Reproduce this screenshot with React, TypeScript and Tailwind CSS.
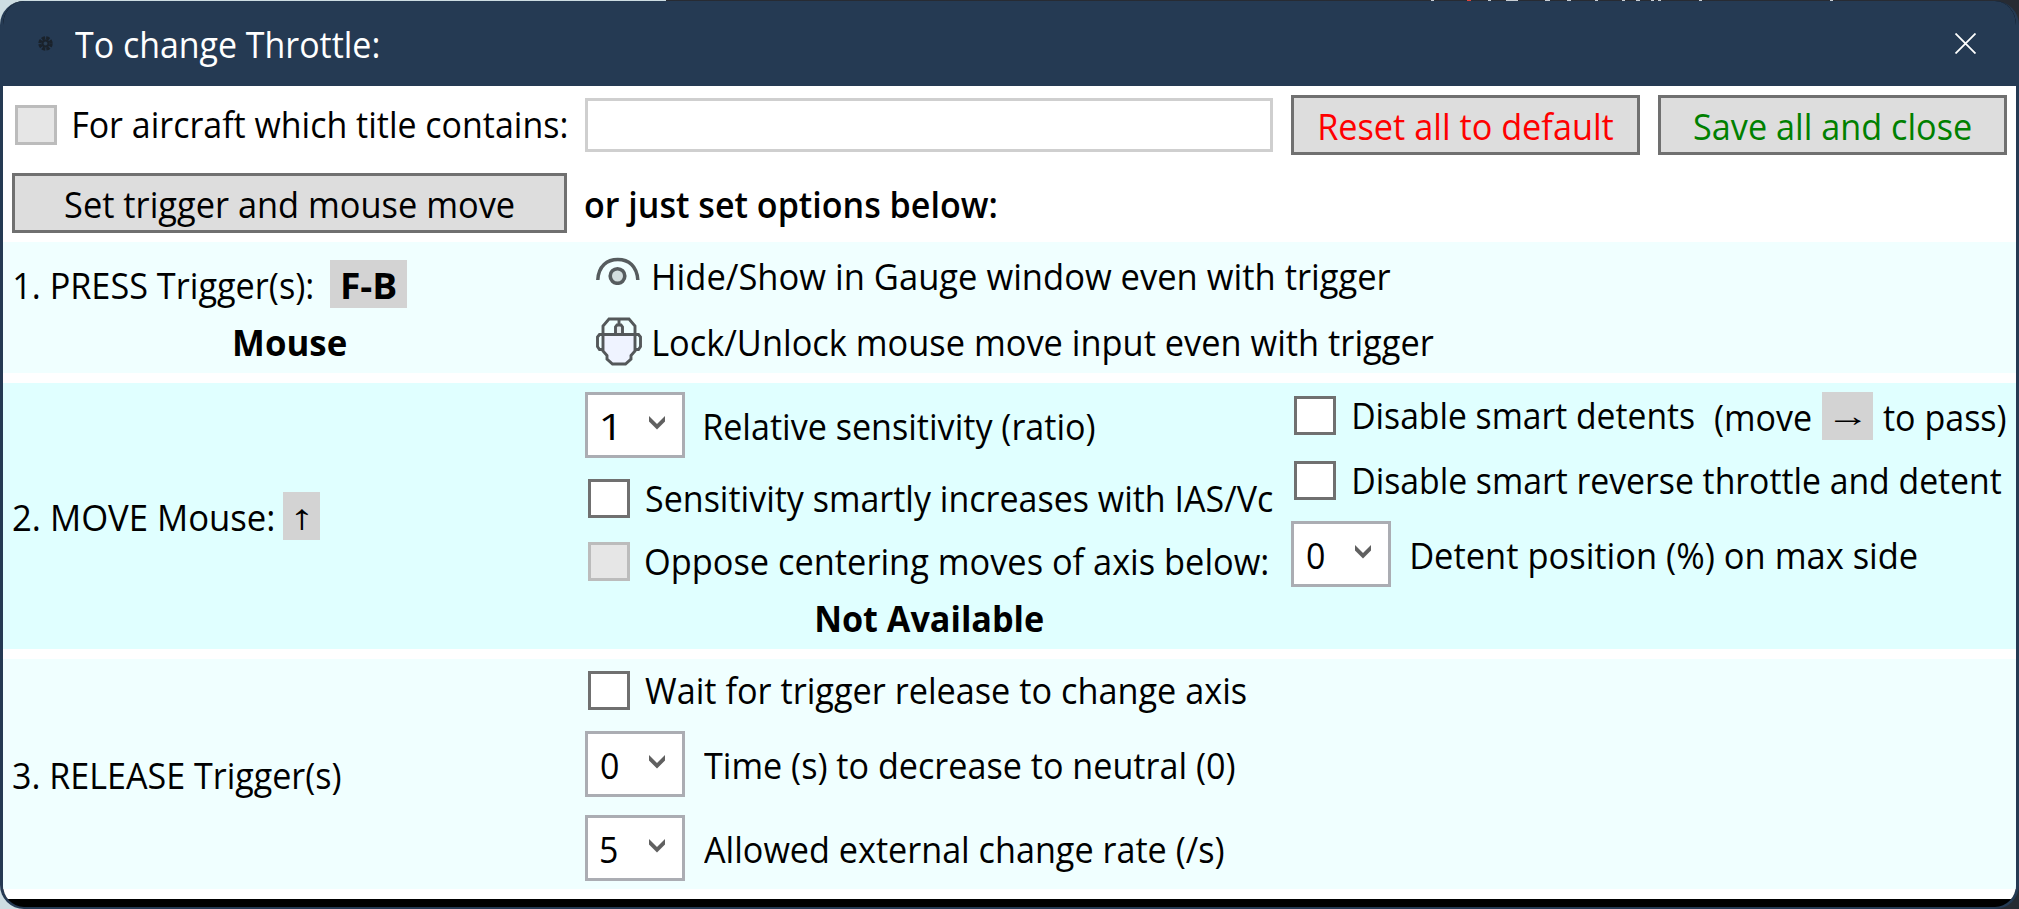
import { useLayoutEffect, useRef, useState } from 'react';
import type { ReactNode } from 'react';

/* Text run whose ink is fitted to the width of its box. */
function T({ children, className = '' }: { children: string; className?: string }) {
  const ref = useRef<HTMLSpanElement>(null);
  const [fit, setFit] = useState({ scale: 1, shift: 0 });
  useLayoutEffect(() => {
    const el = ref.current;
    const ctx = document.createElement('canvas').getContext('2d');
    if (!el || !el.parentElement || !ctx) return;
    const cs = getComputedStyle(el);
    ctx.font = `${cs.fontWeight} ${cs.fontSize} ${cs.fontFamily}`;
    const m = ctx.measureText(children);
    const ink = m.actualBoundingBoxLeft + m.actualBoundingBoxRight;
    const scale = el.parentElement.clientWidth / ink;
    setFit({ scale, shift: m.actualBoundingBoxLeft * scale });
  }, [children]);
  return (
    <span className={`block h-12 shrink-0 whitespace-nowrap leading-[50px] ${className}`}>
      <span
        ref={ref}
        className="inline-block origin-left"
        style={{ transform: `translateX(${fit.shift}px) scaleX(${fit.scale})` }}
      >
        {children}
      </span>
    </span>
  );
}

function Check({ disabled = false, className = '' }: { disabled?: boolean; className?: string }) {
  return (
    <span
      className={`block w-[42px] shrink-0 border-[3px] ${
        disabled ? 'border-[#bcbcbc] bg-[#e6e6e6]' : 'border-[#707070] bg-white'
      } ${className}`}
    />
  );
}

function Combo({ value, digit }: { value: string; digit: string }) {
  return (
    <span className="flex h-[66px] w-[100px] shrink-0 items-start border-[3px] border-[#abadb3] bg-white">
      <span className="flex w-[61px] shrink-0 pt-[7px]">
        <T className={digit}>{value}</T>
      </span>
      <svg className="mt-[21px] h-[14px] w-[16px] shrink-0" viewBox="0 0 16 14">
        <path d="M0 0v5.500L8 13.500l8-8V0L8 8z" fill="#606060" />
      </svg>
    </span>
  );
}

function Button({ children, className }: { children: ReactNode; className: string }) {
  return (
    <button className={`flex h-[60px] shrink-0 border-[3px] border-[#707070] bg-[#dddddd] pt-1 ${className}`}>
      {children}
    </button>
  );
}

function Chip({ children, className }: { children: ReactNode; className: string }) {
  return <span className={`flex h-12 shrink-0 bg-[#d3d3d3] ${className}`}>{children}</span>;
}

function GearIcon() {
  return (
    <svg className="ml-[35px] mt-[35px] h-[15px] w-[15px] shrink-0" viewBox="0 0 15 15" fill="none" stroke="#1a222b">
      <circle cx="7.500" cy="7.500" r="5.600" strokeWidth="3.200" strokeDasharray="3.300 1.100" />
      <circle cx="7.500" cy="7.500" r="3" strokeWidth="2" />
      <circle cx="7.500" cy="7.500" r="1.200" fill="#2f4152" stroke="none" />
    </svg>
  );
}

function EyeIcon() {
  return (
    <svg className="ml-[11px] mt-[15px] h-[28px] w-[44px] shrink-0" viewBox="0 0 44 28" fill="none" stroke="#565c5e">
      <path d="M1.800 23C2.500 9 11 2.500 21.800 2.500S41 9 41.800 23" strokeWidth="3.500" />
      <circle cx="21.500" cy="19" r="7.300" fill="#d3dede" strokeWidth="3.600" />
    </svg>
  );
}

function MouseIcon() {
  return (
    <svg className="ml-[11px] mt-[9px] h-[49px] w-[46px] shrink-0" viewBox="0 0 46 49" fill="none" stroke="#54585a" strokeWidth="2.900">
      <path d="M7 17.500H39V34L35 38.500V42L29.500 47H16.500L11 42V38.500L7 34Z" fill="#eff3ff" />
      <path d="M7 17.500V9L13 2H33L39 9V17.500" />
      <path d="M7 17.500H3.500L1.500 20V29.500L3.500 32.500H7M39 17.500h3.500L44.500 20V29.500L42.500 32.500H39" />
      <path d="M23 2v6M19.500 17.500V10L21 8h4l1.500 2v7.500z" fill="#e4eaec" />
    </svg>
  );
}

/* Sliver of the windows lying behind the dialog. */
function BackdropSliver() {
  return (
    <svg className="block h-px w-[2019px]" viewBox="0 0 2019 1" fill="#c9ced3">
      <path d="M1431 0h3v1h-3zM1488 0h3v1h-3zM1506 0h12v1h-12zM1545 0h5v1h-5zM1567 0h4v1h-4zM1595 0h3v1h-3zM1622 0h3v1h-3zM1636 0h4v1h-4zM1651 0h3v1h-3zM1658 0h3v1h-3zM1699 0h3v1h-3zM1830 0h3v1h-3z" />
      <path d="M1467 0h4v1h-4z" fill="#e0453c" />
    </svg>
  );
}

export default function App() {
  return (
    <div className="h-[909px] w-[2019px] overflow-hidden bg-linear-to-r from-[#cddde2] from-33% to-[#272b33] to-33% font-['Open_Sans','Noto_Sans',sans-serif] text-[36px] text-black">
      <BackdropSliver />
      <div className="flex h-[908px] flex-col overflow-hidden rounded-[24px] border-x-[3px] border-b-2 border-[#253a53] bg-black">
        <header className="flex h-[85px] shrink-0 bg-[#253a53]">
          <GearIcon />
          <div className="ml-[22px] flex pt-[19px] text-white">
            <T className="w-[303px]">To change Throttle:</T>
          </div>
          <svg className="ml-auto mr-[40px] mt-[32px] h-[21px] w-[21px]" viewBox="0 0 21 21" stroke="#fff" strokeWidth="1.800">
            <path d="M0.500 0.500l20 20M20.500 0.500l-20 20" />
          </svg>
        </header>

        <main className="flex h-[813px] shrink-0 flex-col bg-white">
          <div className="flex h-[78px] items-start pl-3">
            <Check disabled className="mt-[19px] h-10" />
            <div className="ml-[17px] pt-[14px]">
              <T className="w-[492px]">For aircraft which title contains:</T>
            </div>
            <div className="ml-[19px] mt-3 h-[54px] w-[688px] border-[3px] border-[#cfcfcf] bg-white" />
            <div className="ml-[18px] flex gap-[18px] pt-[9px]">
              <Button className="w-[349px] pl-[26px] text-[#ff0000]">
                <T className="w-[293px]">Reset all to default</T>
              </Button>
              <Button className="w-[349px] pl-[33px] text-[#008000]">
                <T className="w-[277px]">Save all and close</T>
              </Button>
            </div>
          </div>
          <div className="flex h-[78px] pl-[9px] pt-[9px]">
            <Button className="w-[555px] pl-[50px]">
              <T className="w-[449px]">Set trigger and mouse move</T>
            </Button>
            <div className="ml-[18px] pt-[7px] font-semibold">
              <T className="w-[411px]">or just set options below:</T>
            </div>
          </div>

          <section className="flex h-[131px] shrink-0 bg-[#f0ffff]">
            <div className="w-[582px] pl-3 pt-[18px]">
              <div className="flex">
                <T className="mt-px w-[297px]">1. PRESS Trigger(s):</T>
                <Chip className="ml-[18px] w-[77px] pl-[13px] pt-px font-bold">
                  <T className="w-[53px]">F-B</T>
                </Chip>
              </div>
              <div className="ml-[220px] mt-[9px] font-bold">
                <T className="w-[111px]">Mouse</T>
              </div>
            </div>
            <div>
              <div className="flex h-[66px]">
                <EyeIcon />
                <T className="ml-[14px] mt-[10px] w-[737px]">Hide/Show in Gauge window even with trigger</T>
              </div>
              <div className="flex h-[65px]">
                <MouseIcon />
                <T className="ml-[12px] mt-[10px] w-[780px]">Lock/Unlock mouse move input even with trigger</T>
              </div>
            </div>
          </section>

          <section className="mt-[10px] flex h-[266px] shrink-0 bg-[#e0ffff]">
            <div className="flex w-[582px] shrink-0 pl-[10px] pt-[109px]">
              <T className="mt-px w-[260px]">2. MOVE Mouse:</T>
              <Chip className="ml-[10px] w-[37px] pl-[12px] font-['Liberation_Sans',sans-serif] text-[35px]">
                <T className="w-[13px]">↑</T>
              </Chip>
            </div>
            <div className="w-[706px] shrink-0 pt-[9px]">
              <div className="flex">
                <Combo value="1" digit="ml-[14px] w-[12px]" />
                <T className="ml-5 mt-[10px] w-[390px]">Relative sensitivity (ratio)</T>
              </div>
              <div className="mt-4 flex pl-[3px]">
                <Check className="mt-[5px] h-[39px]" />
                <T className="ml-4 w-[627px]">Sensitivity smartly increases with IAS/Vc</T>
              </div>
              <div className="mt-[15px] flex pl-[3px]">
                <Check disabled className="mt-[5px] h-[39px]" />
                <T className="ml-4 w-[621px]">Oppose centering moves of axis below:</T>
              </div>
              <div className="ml-[232px] mt-[9px] font-bold">
                <T className="w-[226px]">Not Available</T>
              </div>
            </div>
            <div className="pt-2">
              <div className="flex pl-[3px]">
                <Check className="mt-[5px] h-[39px]" />
                <T className="ml-[18px] w-[340px]">Disable smart detents</T>
                <T className="ml-[21px] mt-0.5 w-[96px]">(move</T>
                <Chip className="ml-[11px] mt-px w-[51px] pl-[13px] font-['Liberation_Sans',sans-serif] text-[30px]">
                  <T className="-mt-px w-[26px]">→</T>
                </Chip>
                <T className="ml-[10px] mt-0.5 w-[123px]">to pass)</T>
              </div>
              <div className="mt-[15px] flex pl-[3px]">
                <Check className="mt-[5px] h-[39px]" />
                <T className="ml-[18px] w-[647px]">Disable smart reverse throttle and detent</T>
              </div>
              <div className="mt-[17px] flex">
                <Combo value="0" digit="ml-[13px] w-[17px]" />
                <T className="ml-[21px] mt-[10px] w-[505px]">Detent position (%) on max side</T>
              </div>
            </div>
          </section>

          <section className="mt-[10px] flex h-[230px] shrink-0 bg-[#f0ffff]">
            <div className="w-[582px] shrink-0 pl-[10px] pt-[92px]">
              <T className="w-[328px]">3. RELEASE Trigger(s)</T>
            </div>
            <div className="pt-[7px]">
              <div className="flex pl-[3px]">
                <Check className="mt-[5px] h-[39px]" />
                <T className="ml-[15px] w-[601px]">Wait for trigger release to change axis</T>
              </div>
              <div className="mt-[17px] flex">
                <Combo value="0" digit="ml-[13px] w-[17px]" />
                <T className="ml-[19px] mt-[10px] w-[531px]">Time (s) to decrease to neutral (0)</T>
              </div>
              <div className="mt-[18px] flex">
                <Combo value="5" digit="ml-[13px] w-[16px]" />
                <T className="ml-[19px] mt-[10px] w-[520px]">Allowed external change rate (/s)</T>
              </div>
            </div>
          </section>
        </main>
      </div>
    </div>
  );
}
